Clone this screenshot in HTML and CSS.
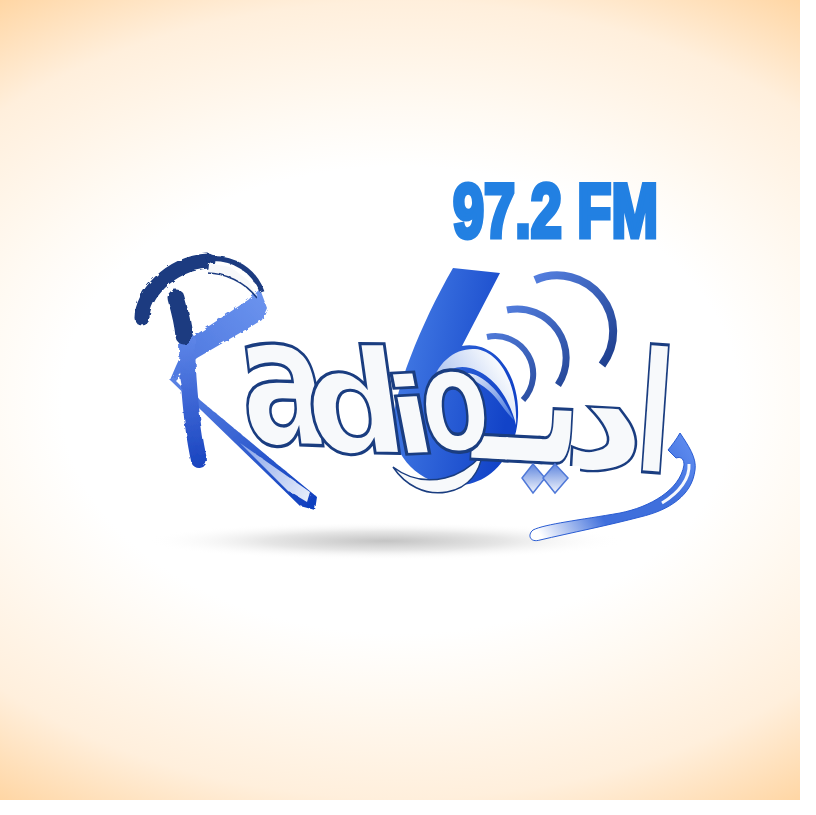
FILE: index.html
```html
<!DOCTYPE html>
<html>

<head>
  <meta charset="utf-8">
  <title>Radio 6</title>
  <link rel="stylesheet" href="styles.css">
</head>

<body>
  <div class="poster">
    <svg class="logo" viewBox="0 0 800 800" width="800" height="800">
      <defs>
        <filter id="rough" x="-10%" y="-10%" width="120%" height="120%">
          <feTurbulence type="fractalNoise" baseFrequency="0.18" numOctaves="2" seed="4" />
          <feDisplacementMap in="SourceGraphic" scale="3.5" />
          <feGaussianBlur stdDeviation="0.4" />
        </filter>
        <radialGradient id="shadow-grad">
          <stop offset="0" stop-color="#c4c4c4" />
          <stop offset="0.5" stop-color="#e6e6e6" />
          <stop offset="1" stop-color="#fff" stop-opacity="0" />
        </radialGradient>
        <linearGradient id="six-grad" gradientUnits="userSpaceOnUse" x1="400" y1="380" x2="510" y2="400">
          <stop offset="0" stop-color="#3f76e2" />
          <stop offset="1" stop-color="#1243c8" />
        </linearGradient>
        <linearGradient id="stem-grad" gradientUnits="userSpaceOnUse" x1="185" y1="337" x2="200" y2="465">
          <stop offset="0" stop-color="#5e86e8" />
          <stop offset="1" stop-color="#1a45c0" />
        </linearGradient>
        <linearGradient id="bowl-grad" gradientUnits="userSpaceOnUse" x1="265" y1="295" x2="190" y2="370">
          <stop offset="0" stop-color="#6b93ee" />
          <stop offset="1" stop-color="#4f79e0" />
        </linearGradient>
        <linearGradient id="leg-grad" gradientUnits="userSpaceOnUse" x1="175" y1="380" x2="315" y2="505">
          <stop offset="0" stop-color="#5a82e4" />
          <stop offset="1" stop-color="#0f3fbe" />
        </linearGradient>
        <linearGradient id="tail-grad" gradientUnits="userSpaceOnUse" x1="240" y1="445" x2="310" y2="500">
          <stop offset="0" stop-color="#8aa6ea" />
          <stop offset="1" stop-color="#e8eefb" />
        </linearGradient>
        <linearGradient id="wave-grad" gradientUnits="userSpaceOnUse" x1="490" y1="285" x2="590" y2="390">
          <stop offset="0" stop-color="#5f8cf0" />
          <stop offset="1" stop-color="#1c3c8a" />
        </linearGradient>
        <linearGradient id="swirl-grad" gradientUnits="userSpaceOnUse" x1="430" y1="390" x2="490" y2="350">
          <stop offset="0" stop-color="#9db8ee" />
          <stop offset="1" stop-color="#f8fafd" />
        </linearGradient>
        <linearGradient id="swirl-fade" gradientUnits="userSpaceOnUse" x1="480" y1="360" x2="515" y2="420">
          <stop offset="0" stop-color="#f4f7fc" />
          <stop offset="1" stop-color="#3c6fdc" />
        </linearGradient>
        <linearGradient id="dot-grad" x1="0" y1="0" x2="0" y2="1">
          <stop offset="0" stop-color="#5f86de" />
          <stop offset="1" stop-color="#f2f5fc" />
        </linearGradient>
        <linearGradient id="ra-grad" gradientUnits="userSpaceOnUse" x1="540" y1="535" x2="690" y2="440">
          <stop offset="0" stop-color="#fff" />
          <stop offset="0.35" stop-color="#3f6fdc" />
          <stop offset="0.75" stop-color="#3f6fdc" />
          <stop offset="1" stop-color="#5f8cf0" />
        </linearGradient>
      </defs>

      <ellipse class="ground" cx="385" cy="541" rx="240" ry="19" />

      <text class="freq" x="453" y="237" textLength="205" lengthAdjust="spacingAndGlyphs">97.2 FM</text>

      <!-- the 6 and its swirl -->
      <path class="six" d="M453 268 L500 273 L462 346 C495 340 520 375 518 417 C516 455 490 485 458 485 C420 487 392 455 393 425 C393 395 420 325 453 268 Z" />
      <path class="swirl-a" d="M430 390 C436 362 455 348 475 349 C500 351 518 385 516 425 C510 400 495 375 470 368 C452 364 438 374 430 390 Z" />
      <path class="swirl-b" d="M458 374 C475 368 498 385 514 420 C505 412 498 398 488 390 C478 382 468 376 458 374 Z" />
      <path class="swoosh" d="M393 467 C410 480 428 482 445 478 C458 475 470 468 482 455 C480 470 470 488 447 492 C425 496 405 485 393 467 Z" />

      <!-- signal arcs -->
      <path class="wave wave-1" d="M487 337 A38 38 0 0 1 523 400" />
      <path class="wave wave-2" d="M507 310 A49 49 0 0 1 558 385" />
      <path class="wave wave-3" d="M535 280 A56 56 0 0 1 602 365" />

      <!-- brush strokes of the R -->
      <g class="r-mark">
        <path class="r-leg" d="M170 380 L178 374 L200 400 L317 497 L315 510 L300 506 Z" />
        <path class="r-tail" d="M240 443 L310 492 L307 502 L287 490 Z" />
        <path class="r-bowl" d="M248 300 L260 289 L267 308 L262 320 L197 358 L178 375 L170 380 L176 366 L188 340 Z" />
        <path class="r-stem" d="M187 340 C187 360 190 420 199 460" />
        <path class="r-dark r-dark-top" d="M176 298 C180 312 183 325 184 336" />
        <path class="r-dark" d="M142 318 C142 296 168 264 208 261" />
        <path class="r-cres" d="M208 263 L230 267 L248 280 L258 298 L252 290 L230 277 L207 273 Z" />
        <path class="r-rim" d="M206 259 C235 256 255 272 262 292" />
        <path class="r-rim-thin" d="M207 273 C225 273 245 282 257 298" />
        <path class="r-gap" d="M176 381 L180 377 L182 387 Z" />
      </g>

      <!-- Arabic lettering -->
      <text class="arabic" transform="translate(667 472) rotate(4) scale(0.85 1.5)">ا</text>
      <text class="arabic" transform="translate(642 470) rotate(3) scale(1.4 1.3)">د</text>
      <text class="arabic arabic-ya" transform="translate(577 463) rotate(3) scale(0.9 1.6)">يــ</text>
      <rect class="dot-mask" x="505" y="466" width="75" height="34" />
      <polygon class="dot" points="533,464 545,478 533,493 522,478" />
      <polygon class="dot" points="555,464 568,478 555,493 543,478" />
      <path class="ra" d="M680 433 C688 445 697 458 695 470 C692 495 670 510 640 517 C610 525 570 533 540 540 C530 543 527 535 533 530 C545 524 580 520 620 513 C650 507 680 490 684 465 C684 460 682 456 676 458 L668 450 C672 445 676 440 680 433 Z" />
      <path class="ra-inner" d="M689 464 C690 478 680 492 662 503" />

      <!-- Latin lettering -->
      <text class="letter" transform="translate(246 443) rotate(2) skewX(9) scale(0.72 1)">a</text>
      <text class="letter" transform="translate(312 452) rotate(1) skewX(9) scale(0.77 0.8)">d</text>
      <text class="letter letter-i" transform="translate(396 455) rotate(-3) skewX(8) scale(0.72 0.6)">i</text>
      <text class="letter letter-o" transform="translate(426 452) rotate(-3) skewX(4) scale(0.55 0.8)">o</text>
    </svg>
  </div>
</body>

</html>
```

FILE: styles.css
```css
* {
  margin: 0;
  padding: 0;
}

body {
  background-color: #fff;
}

.poster {
  width: 800px;
  height: 800px;
  background: radial-gradient(ellipse 705px 486px at 50% 50%, #fff 0%, #fff 48%, #fffaf3 60%, #ffefdc 82%, #ffd6a4 100%);
}

.logo {
  display: block;
}

.ground {
  fill: url(#shadow-grad);
}

.freq {
  font-family: "Liberation Sans", sans-serif;
  font-weight: bold;
  font-size: 76px;
  fill: #2280e2;
  stroke: #2280e2;
  stroke-width: 5px;
  stroke-linejoin: miter;
}

.six {
  fill: url(#six-grad);
}

.swirl-a {
  fill: url(#swirl-grad);
}

.swirl-b {
  fill: url(#swirl-fade);
}

.swoosh {
  fill: #f7f9fb;
  stroke: #1a3d80;
  stroke-width: 1.5px;
}

.wave {
  fill: none;
  stroke: url(#wave-grad);
}

.wave-1 {
  stroke-width: 6px;
}

.wave-2 {
  stroke-width: 7px;
}

.wave-3 {
  stroke-width: 8px;
}

.r-mark {
  filter: url(#rough);
}

.r-leg {
  fill: url(#leg-grad);
}

.r-tail {
  fill: url(#tail-grad);
}

.r-bowl {
  fill: url(#bowl-grad);
}

.r-stem {
  fill: none;
  stroke: url(#stem-grad);
  stroke-width: 16px;
  stroke-linecap: round;
}

.r-dark {
  fill: none;
  stroke: #1a3a80;
  stroke-width: 15px;
  stroke-linecap: round;
}

.r-dark-top {
  stroke-width: 17px;
}

.r-cres {
  fill: #f7f8fa;
}

.r-rim {
  fill: none;
  stroke: #1a3a80;
  stroke-width: 5px;
}

.r-rim-thin {
  fill: none;
  stroke: #1a3a80;
  stroke-width: 1.5px;
}

.r-gap {
  fill: #fff;
}

.letter {
  font-family: "DejaVu Sans", sans-serif;
  font-weight: bold;
  font-size: 180px;
  fill: #f7f9fb;
  stroke: #1a3d80;
  stroke-width: 3px;
  vector-effect: non-scaling-stroke;
}

.arabic {
  font-family: "DejaVu Sans", sans-serif;
  font-weight: bold;
  font-size: 110px;
  fill: #f7f9fb;
  stroke: #1a3d80;
  stroke-width: 5px;
  vector-effect: non-scaling-stroke;
  paint-order: stroke;
  direction: rtl;
}

.dot-mask {
  fill: #fff;
}

.dot {
  fill: url(#dot-grad);
  stroke: #4f78d8;
  stroke-width: 1.5px;
}

.ra {
  fill: url(#ra-grad);
  stroke: #2a5cd2;
  stroke-width: 1px;
}

.ra-inner {
  fill: none;
  stroke: #f7f9fd;
  stroke-width: 3px;
}
```
